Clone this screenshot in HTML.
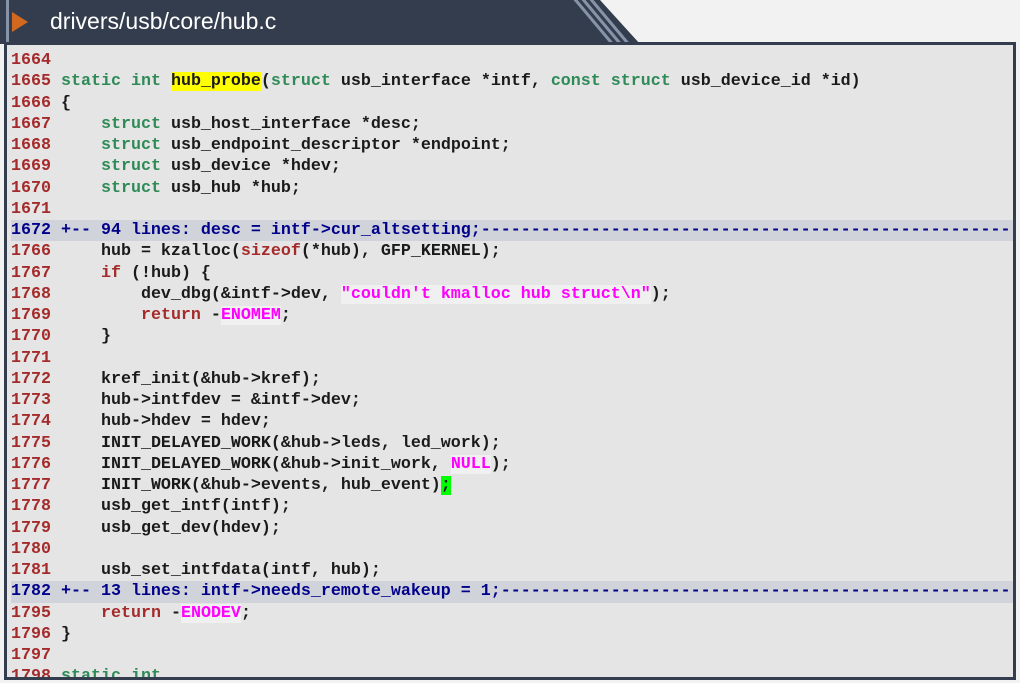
<!DOCTYPE html><html><head><style>
body{margin:0;width:1020px;height:683px;background:#f2f2f2;overflow:hidden;position:relative;font-family:"Liberation Sans",sans-serif}
.hdr{position:absolute;left:0;top:0;width:640px;height:44px;background:#343d4e;clip-path:polygon(0 0,600px 0,640px 44px,0 44px)}
.s1{position:absolute;top:0;height:44px;width:4px;background:#8793a8;transform:skewX(40deg)}
.tri{position:absolute;left:12px;top:12px;width:0;height:0;border-left:16px solid #d2691e;border-top:10px solid transparent;border-bottom:10px solid transparent}
.bar{position:absolute;left:6px;top:0;width:3px;height:44px;background:#8793a8}
.ttl{position:absolute;left:50px;top:8px;color:#fff;font-size:23px}
.panel{position:absolute;left:4px;top:42px;width:1006px;height:632px;border:3px solid #343d4e;background:#e5e5e5;overflow:hidden}
pre{margin:0;position:absolute;left:4px;top:5px;font-family:"Liberation Mono",monospace;font-weight:bold;font-size:16.67px;line-height:21.25px;color:#1a1a1a}
.n{color:#a52a2a}.k{color:#2e8b57}.r{color:#a52a2a}.m{color:#ff00ff;background:#f0f0f0}
.f{display:block;background:#d0d3da;color:#00008b;width:1010px}
.y{background:#ffff00}.g{background:#00ff00}
</style></head><body>
<div class="hdr"><div class="bar"></div><div class="tri"></div><div class="ttl">drivers/usb/core/hub.c</div>
<div class="s1" style="left:592px"></div><div class="s1" style="left:600px"></div><div class="s1" style="left:608px"></div></div>
<div class="panel"><pre><span class="n">1664</span>
<span class="n">1665</span> <span class="k">static int</span> <span class="y">hub_probe</span>(<span class="k">struct</span> usb_interface *intf, <span class="k">const struct</span> usb_device_id *id)
<span class="n">1666</span> {
<span class="n">1667</span>     <span class="k">struct</span> usb_host_interface *desc;
<span class="n">1668</span>     <span class="k">struct</span> usb_endpoint_descriptor *endpoint;
<span class="n">1669</span>     <span class="k">struct</span> usb_device *hdev;
<span class="n">1670</span>     <span class="k">struct</span> usb_hub *hub;
<span class="n">1671</span>
<span class="f">1672 +-- 94 lines: desc = intf-&gt;cur_altsetting;--------------------------------------------------------------------------</span><span class="n">1766</span>     hub = kzalloc(<span class="r">sizeof</span>(*hub), GFP_KERNEL);
<span class="n">1767</span>     <span class="r">if</span> (!hub) {
<span class="n">1768</span>         dev_dbg(&amp;intf-&gt;dev, <span class="m">"couldn't kmalloc hub struct\n"</span>);
<span class="n">1769</span>         <span class="r">return</span> -<span class="m">ENOMEM</span>;
<span class="n">1770</span>     }
<span class="n">1771</span>
<span class="n">1772</span>     kref_init(&amp;hub-&gt;kref);
<span class="n">1773</span>     hub-&gt;intfdev = &amp;intf-&gt;dev;
<span class="n">1774</span>     hub-&gt;hdev = hdev;
<span class="n">1775</span>     INIT_DELAYED_WORK(&amp;hub-&gt;leds, led_work);
<span class="n">1776</span>     INIT_DELAYED_WORK(&amp;hub-&gt;init_work, <span class="m">NULL</span>);
<span class="n">1777</span>     INIT_WORK(&amp;hub-&gt;events, hub_event)<span class="g">;</span>
<span class="n">1778</span>     usb_get_intf(intf);
<span class="n">1779</span>     usb_get_dev(hdev);
<span class="n">1780</span>
<span class="n">1781</span>     usb_set_intfdata(intf, hub);
<span class="f">1782 +-- 13 lines: intf-&gt;needs_remote_wakeup = 1;--------------------------------------------------------------------------</span><span class="n">1795</span>     <span class="r">return</span> -<span class="m">ENODEV</span>;
<span class="n">1796</span> }
<span class="n">1797</span>
<span class="n">1798</span> <span class="k">static int</span>
</pre></div>
</body></html>
